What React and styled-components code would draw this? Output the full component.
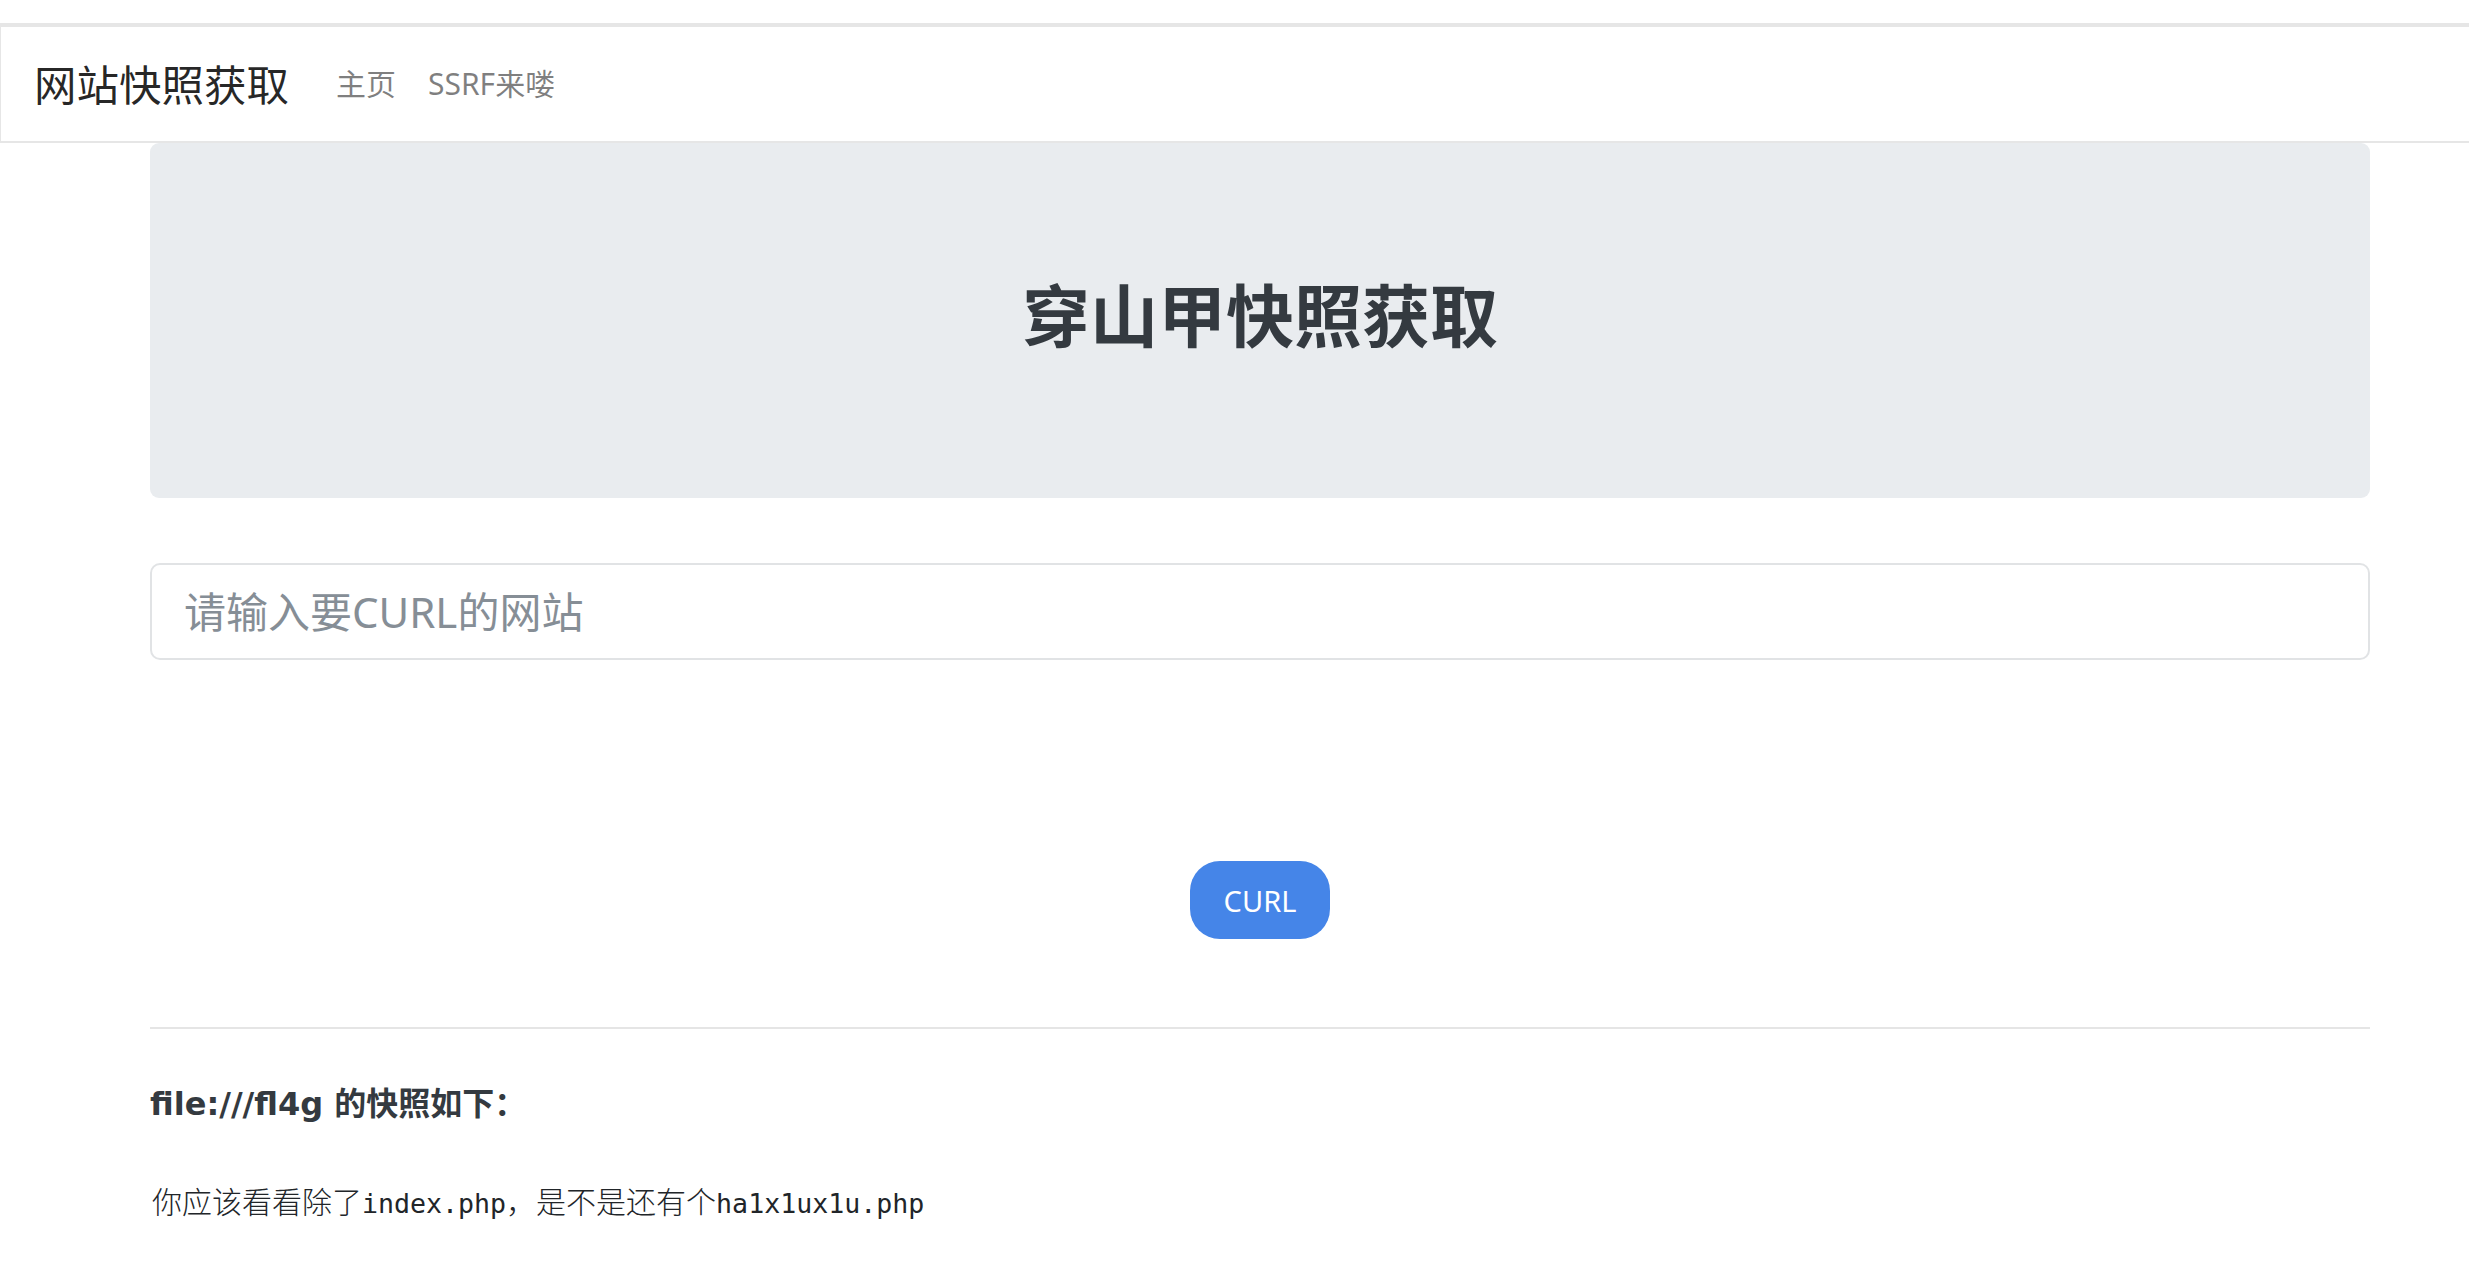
import React from "react";
import styled, { createGlobalStyle } from "styled-components";

const Global = createGlobalStyle`
  html, body { margin: 0; padding: 0; background: #fff; }
  body {
    font-family: "Noto Sans", "Noto Sans CJK SC", sans-serif;
    color: #212529;
  }
  * { box-sizing: border-box; }
`;

const Navbar = styled.nav`
  margin-top: 23px;
  height: 120px;
  border-top: 4px solid #e6e6e6;
  border-left: 1px solid #e6e6e6;
  border-bottom: 2px solid #e6e6e6;
  display: flex;
  align-items: center;
  padding-left: 33px;
`;

const Brand = styled.a`
  font-family: "Noto Sans", "Noto Sans CJK SC", sans-serif;
  font-size: 42.5px;
  line-height: 1;
  color: rgba(0, 0, 0, 0.85);
  text-decoration: none;
  margin-right: 47px;
  margin-top: 3px;
`;

const NavList = styled.div`
  display: flex;
  align-items: center;
  gap: 32px;
`;

const NavLink = styled.a`
  font-family: "Noto Sans", "Noto Sans CJK SC", sans-serif;
  font-size: 30px;
  line-height: 1;
  color: rgba(0, 0, 0, 0.5);
  text-decoration: none;
`;

const Main = styled.main`
  margin-left: 150px;
  width: 2220px;
  display: flex;
  flex-direction: column;
`;

const Jumbotron = styled.section`
  height: 355px;
  background: #e9ecef;
  border-radius: 9px;
  display: flex;
  align-items: center;
  justify-content: center;
`;

const Title = styled.h1`
  margin: 0 0 16px 0;
  font-size: 68px;
  font-weight: 700;
  line-height: 1;
  color: #343a40;
  font-family: "Noto Sans CJK SC", sans-serif;
`;

const Input = styled.input`
  margin-top: 65px;
  height: 97px;
  width: 100%;
  border: 2px solid #e1e3e5;
  border-radius: 10px;
  padding: 0 32px;
  font-size: 42px;
  font-family: "Noto Sans", "Noto Sans CJK SC", sans-serif;
  color: #495057;
  background: #fff;
  outline: none;
  &::placeholder {
    color: #868e96;
  }
`;

const ButtonRow = styled.div`
  margin-top: 201px;
  display: flex;
  justify-content: center;
`;

const Button = styled.button`
  width: 140px;
  height: 78px;
  border: none;
  border-radius: 30px;
  background: #4585e8;
  color: #fff;
  font-size: 29px;
  font-family: "Noto Sans", "Noto Sans CJK SC", sans-serif;
  padding: 0;
  cursor: pointer;
`;

const Rule = styled.hr`
  margin: 88px 0 0 0;
  border: 0;
  border-top: 2px solid rgba(0, 0, 0, 0.1);
`;

const ResultTitle = styled.h5`
  margin: 52px 0 0 0;
  font-size: 32px;
  line-height: 46px;
  font-weight: 700;
  color: #343a40;
  font-family: "DejaVu Sans", "Noto Sans CJK SC", sans-serif;
`;

const ResultText = styled.p`
  margin: 51px 0 0 2px;
  font-size: 30px;
  line-height: 45px;
  font-weight: 300;
  color: #212529;
  font-family: "Noto Sans CJK SC", sans-serif;
`;

const Code = styled.span`
  font-family: "DejaVu Sans Mono", "Liberation Mono", monospace;
  font-size: 26.6px;
  font-weight: 400;
  color: #212529;
`;

export default function App() {
  return (
    <>
      <Global />
      <Navbar>
        <Brand href="#">网站快照获取</Brand>
        <NavList>
          <NavLink href="#">主页</NavLink>
          <NavLink href="#">SSRF来喽</NavLink>
        </NavList>
      </Navbar>
      <Main>
        <Jumbotron>
          <Title>穿山甲快照获取</Title>
        </Jumbotron>
        <Input placeholder="请输入要CURL的网站" />
        <ButtonRow>
          <Button>CURL</Button>
        </ButtonRow>
        <Rule />
        <ResultTitle>file:///fl4g 的快照如下：</ResultTitle>
        <ResultText>
          你应该看看除了<Code>index.php</Code>，是不是还有个<Code>ha1x1ux1u.php</Code>
        </ResultText>
      </Main>
    </>
  );
}
